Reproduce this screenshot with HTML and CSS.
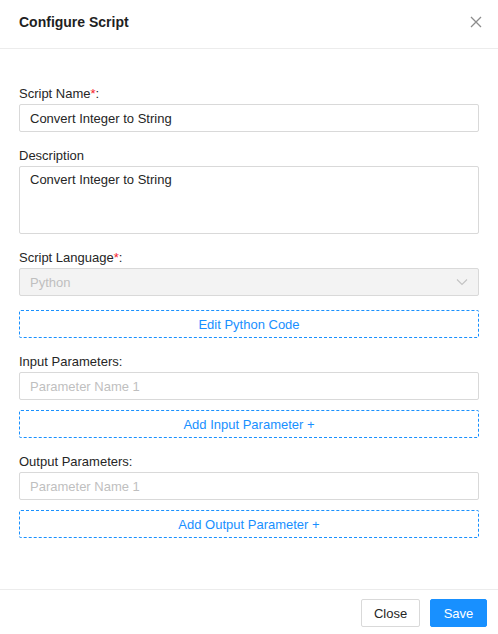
FILE: index.html
```html
<!DOCTYPE html>
<html>
<head>
<meta charset="utf-8">
<link rel="stylesheet" href="styles.css">
</head>
<body>
<div class="modal">
  <div class="modal-header">
    <div class="modal-title">Configure Script</div>
    <button class="close-x" aria-label="Close">
      <svg width="12" height="12" viewBox="0 0 12 12"><path d="M1 1L11 11M11 1L1 11" stroke="#8c8c8c" stroke-width="1.3" fill="none"/></svg>
    </button>
  </div>
  <div class="modal-body">
    <div class="field">
      <label class="label">Script Name<span class="req">*</span>:</label>
      <div class="input">Convert Integer to String</div>
    </div>
    <div class="field">
      <label class="label">Description</label>
      <div class="input textarea">Convert Integer to String</div>
    </div>
    <div class="field">
      <label class="label">Script Language<span class="req">*</span>:</label>
      <div class="input select disabled"><span>Python</span>
        <svg width="12" height="8" viewBox="0 0 12 8"><path d="M1 1.5L6 6.5L11 1.5" stroke="#c4c4c4" stroke-width="1.2" fill="none"/></svg>
      </div>
    </div>
    <div class="field">
      <button class="dashed">Edit Python Code</button>
    </div>
    <div class="field">
      <label class="label">Input Parameters:</label>
      <div class="input placeholder">Parameter Name 1</div>
      <button class="dashed tight">Add Input Parameter +</button>
    </div>
    <div class="field">
      <label class="label">Output Parameters:</label>
      <div class="input placeholder">Parameter Name 1</div>
      <button class="dashed tight">Add Output Parameter +</button>
    </div>
  </div>
  <div class="modal-footer">
    <button class="btn">Close</button>
    <button class="btn primary">Save</button>
  </div>
</div>
</body>
</html>
```
FILE: styles.css
```css
* { box-sizing: border-box; }
html, body { margin: 0; padding: 0; background: #fff; }
body {
  font-family: "Liberation Sans", Arial, sans-serif;
  font-size: 13px;
  color: #262626;
}
.modal { width: 498px; height: 634px; display: flex; flex-direction: column; }
.modal-header {
  height: 49px;
  border-bottom: 1px solid #ececec;
  display: flex;
  align-items: center;
  justify-content: space-between;
  padding: 0 15px 4px 19px;
}
.modal-title { font-size: 14px; font-weight: bold; color: #1f1f1f; }
.close-x { border: 0; background: none; padding: 0; width: 14px; height: 14px; display: flex; align-items: center; justify-content: center; }
.modal-body { flex: 1; padding: 35px 19px 0 19px; display: flex; flex-direction: column; gap: 14px; }
.field { display: flex; flex-direction: column; }
.label { line-height: 20px; color: #262626; }
.req { color: #f5222d; }
.input {
  height: 28px;
  border: 1px solid #d9d9d9;
  border-radius: 2px;
  padding: 0 10px;
  display: flex;
  align-items: center;
  color: #262626;
}
.textarea { height: 68px; align-items: flex-start; padding-top: 5px; }
.placeholder { color: #bfbfbf; }
.select { justify-content: space-between; padding-right: 10px; }
.disabled { background: #f3f3f3; color: #bfbfbf; }
.dashed {
  height: 28px;
  border: 1px dashed #1890ff;
  border-radius: 2px;
  background: #fff;
  color: #1890ff;
  font-family: inherit;
  font-size: 13px;
  padding: 0;
  width: 100%;
}
.dashed.tight { margin-top: 10px; }
.modal-footer {
  border-top: 1px solid #ececec;
  padding: 9px 11px 7px;
  display: flex;
  justify-content: flex-end;
  gap: 10px;
}
.btn {
  height: 28px;
  width: 59px;
  padding: 0;
  border: 1px solid #d9d9d9;
  border-radius: 2px;
  background: #fff;
  color: #262626;
  font-family: inherit;
  font-size: 13px;
}
.btn.primary { background: #1890ff; border-color: #1890ff; color: #fff; width: 57px; }
```
